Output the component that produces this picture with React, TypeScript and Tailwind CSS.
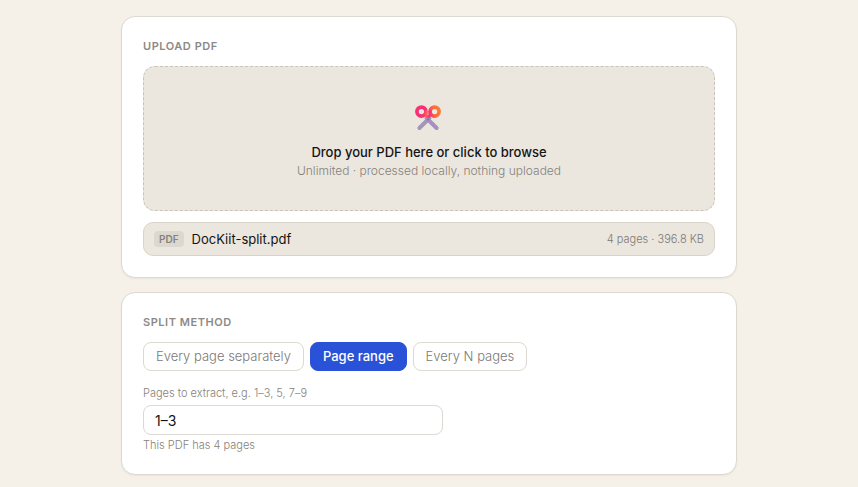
import React, { useState } from 'react';
import clsx from 'clsx';

type SplitMethod = 'every' | 'range' | 'chunks';

const methods: { id: SplitMethod; label: string }[] = [
  { id: 'every', label: 'Every page separately' },
  { id: 'range', label: 'Page range' },
  { id: 'chunks', label: 'Every N pages' },
];

const ScissorsIcon: React.FC = () => (
  <svg viewBox="1 0 28 28" className="w-7 h-7" fill="none" aria-hidden="true">
    <defs>
      <linearGradient id="handleLeft" x1="2" y1="4" x2="14" y2="12" gradientUnits="userSpaceOnUse">
        <stop stopColor="#f8356d" />
        <stop offset="0.6" stopColor="#f2307c" />
        <stop offset="1" stopColor="#fb4f55" />
      </linearGradient>
      <linearGradient id="handleRight" x1="14" y1="10" x2="25" y2="6" gradientUnits="userSpaceOnUse">
        <stop stopColor="#f52f74" />
        <stop offset="0.6" stopColor="#ff6a3d" />
        <stop offset="1" stopColor="#ff7a2f" />
      </linearGradient>
    </defs>
    <path d="M5.4 24 15.4 14.2" stroke="#a397b8" strokeWidth="4" strokeLinecap="round" />
    <path d="M22.6 24 12.6 14.2" stroke="#a78fc0" strokeWidth="4" strokeLinecap="round" />
    <circle cx="7.4" cy="7.6" r="4.5" stroke="url(#handleLeft)" strokeWidth="3.7" />
    <circle cx="20.6" cy="7.6" r="4.5" stroke="url(#handleRight)" strokeWidth="3.7" />
    <path d="M12 7.6c-.2 2.2 0 3.6.9 5" stroke="#ff5a4a" strokeWidth="2.8" strokeLinecap="round" />
    <path d="M16 7.6c.2 2.2 0 3.6-.9 5" stroke="#f8356d" strokeWidth="2.8" strokeLinecap="round" />
    <circle cx="14" cy="15.6" r="1" fill="#7d6b99" />
  </svg>
);

const Card: React.FC<{ title: string; children: React.ReactNode }> = ({ title, children }) => (
  <section className="bg-white border border-[#dcd9d2] rounded-[14px] p-[21px] shadow-xs">
    <h2 className="mb-3 text-[11px] leading-4 font-semibold tracking-wider uppercase text-[#8c8a86]">{title}</h2>
    {children}
  </section>
);

export default function App() {
  const [method, setMethod] = useState<SplitMethod>('range');
  const [range, setRange] = useState('1–3');

  return (
    <main className="min-h-screen bg-[#f5f0e8] py-4 px-4 font-['Inter',sans-serif] text-[#141414]">
      <div className="max-w-[616px] mx-auto flex flex-col gap-3.5">
        <Card title="Upload PDF">
          <button
            type="button"
            className="w-full flex flex-col items-center py-[31px] bg-[#ebe7df] border border-dashed border-[#c9c4b6] rounded-xl cursor-pointer"
          >
            <span className="h-10 mb-[5px] flex items-center">
              <ScissorsIcon />
            </span>
            <span className="text-[13px] leading-[18px] font-medium">Drop your PDF here or click to browse</span>
            <span className="mt-0.5 text-xs leading-4 font-light text-[#85827b]">Unlimited · processed locally, nothing uploaded</span>
          </button>

          <div className="mt-[11px] h-[34px] px-2.5 flex items-center gap-2 bg-[#ebe7df] border border-[#d9d4c8] rounded-[10px]">
            <span className="px-[5px] rounded bg-[#dcd8d0] text-[10px] leading-4 font-semibold text-[#84827d]">PDF</span>
            <span className="flex-1 truncate text-[13px] leading-4">DocKiit-split.pdf</span>
            <span className="text-[11px] leading-4 font-light text-[#7b7975]">4 pages · 396.8 KB</span>
          </div>
        </Card>

        <Card title="Split method">
          <div className="flex flex-wrap gap-1.5">
            {methods.map(m => (
              <button
                key={m.id}
                type="button"
                aria-pressed={method === m.id}
                onClick={() => setMethod(m.id)}
                className={clsx(
                  'h-[29px] px-3 border rounded-lg text-[13px] cursor-pointer',
                  method === m.id
                    ? 'bg-[#2952d9] border-[#2952d9] text-white font-medium'
                    : 'bg-white border-[#dcd9d2] text-[#7b7975] font-light'
                )}
              >
                {m.label}
              </button>
            ))}
          </div>

          <label htmlFor="page-range" className="block mt-3.5 mb-1 text-[11px] leading-4 font-light text-[#85827b]">
            Pages to extract, e.g. 1–3, 5, 7–9
          </label>
          <input
            id="page-range"
            type="text"
            value={range}
            onChange={e => setRange(e.target.value)}
            className="block w-full max-w-[300px] h-[30px] px-[11px] bg-white border border-[#dcd9d2] rounded-lg text-sm outline-none"
          />
          <p className="mt-0.5 text-[11px] leading-4 font-light text-[#85827b]">This PDF has 4 pages</p>
        </Card>
      </div>
    </main>
  );
}
